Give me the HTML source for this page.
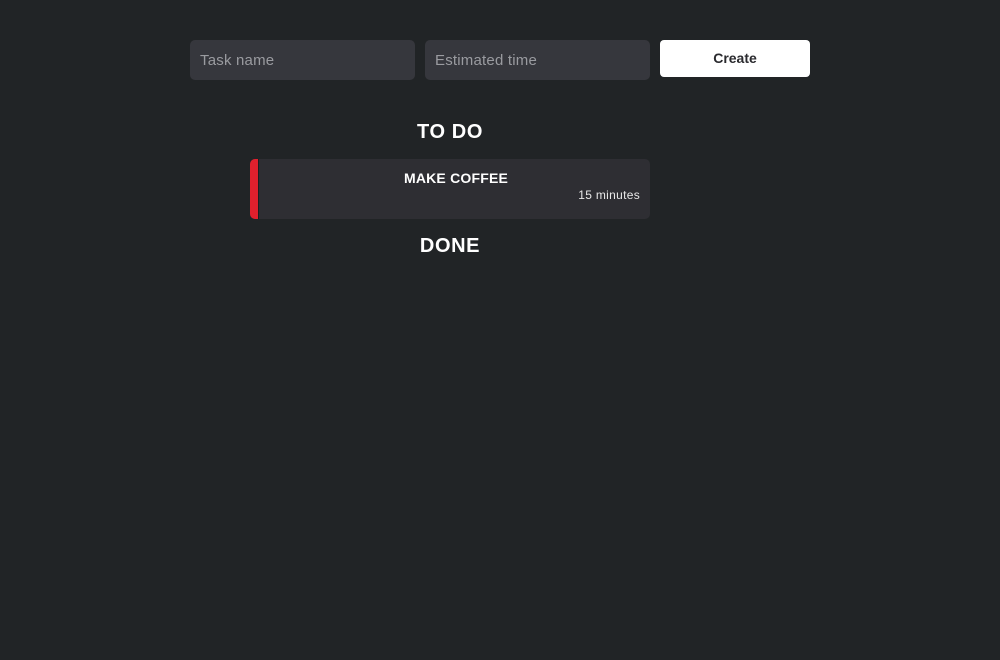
<!DOCTYPE html>
<html><head><style>
body{margin:0;background:#212426;width:1000px;height:660px;font-family:"Liberation Sans",sans-serif;position:relative;overflow:hidden}
.in{position:absolute;top:40px;height:40px;width:225px;background:#36373d;border-radius:5px;color:#9a9ba0;font-size:15px;line-height:40px;padding-left:10px;box-sizing:border-box;letter-spacing:0.2px}
.btn{position:absolute;left:660px;top:40px;width:150px;height:37px;background:#fff;border-radius:4px;text-align:center;line-height:37px;font-weight:bold;font-size:14px;color:#2a2a2e}
h2{position:absolute;left:0;width:900px;text-align:center;margin:0;color:#fff;font-size:20px;font-weight:bold;letter-spacing:0.6px}
.card{position:absolute;left:250px;top:159px;width:400px;height:60px;background:#2e2e33;border-radius:5px;overflow:hidden}
.bar{position:absolute;left:0;top:0;width:8px;height:60px;background:#e2202d;border-right:1px solid #1e1e22}
.t{position:absolute;left:0;width:412px;top:11px;text-align:center;color:#fff;font-weight:bold;font-size:14px;letter-spacing:0.2px}
.m{position:absolute;right:10px;top:29px;color:#e8e8e8;font-size:12px;letter-spacing:0.3px}
</style></head><body>
<div class="in" style="left:190px;line-height:41px">Task name</div>
<div class="in" style="left:425px;line-height:41px">Estimated time</div>
<div class="btn">Create</div>
<h2 style="top:121px">TO DO</h2>
<div class="card"><div class="bar"></div><div class="t">MAKE COFFEE</div><div class="m">15 minutes</div></div>
<h2 style="top:235px">DONE</h2>
</body></html>
